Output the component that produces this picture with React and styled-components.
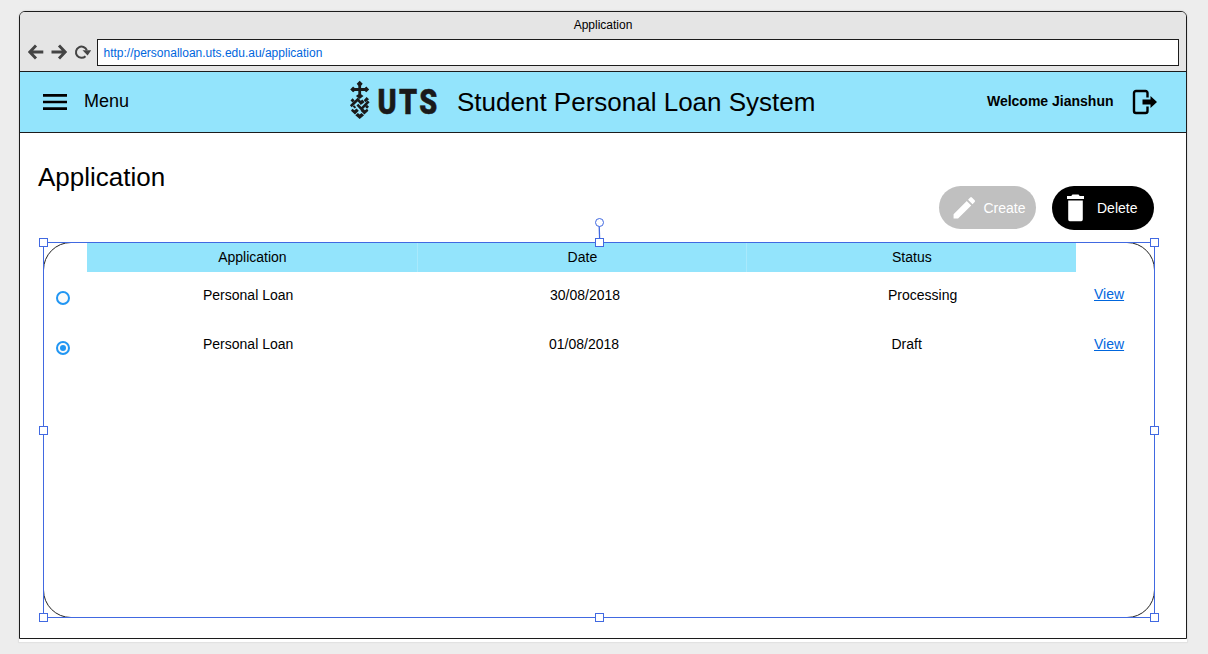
import React from 'react';
import styled, { createGlobalStyle } from 'styled-components';

const Global = createGlobalStyle`
  * { box-sizing: border-box; }
  body { margin: 0; background: #ededed; font-family: "Liberation Sans", Arial, sans-serif; color: #000; }
`;
const Desk = styled.div`
  width: 1208px; height: 654px; padding: 11px 0 0 19px; overflow: hidden; background: #ededed;
`;
const Paper = styled.div`
  width: 1168px; height: 631px; background: #fff; border-radius: 6px 6px 0 0; box-shadow: 0 0 1px 1px #e0e0e0;
`;
const Browser = styled.div`
  height: 628px; border: 1px solid #1c1c1c; border-radius: 6px 6px 0 0; overflow: hidden; background: #fff;
`;
const Chrome = styled.div`
  height: 60px; background: #e5e5e5; border-bottom: 1px solid #1c1c1c;
`;
const TabTitle = styled.div`
  height: 27px; line-height: 26px; font-size: 12px; text-align: center;
`;
const AddressBar = styled.div`
  display: flex; align-items: center; height: 27px; padding: 0 7px;
`;
const NavIcons = styled.svg`
  width: 70px; height: 27px; flex: none;
`;
const Address = styled.div`
  flex: 1; height: 27px; padding-left: 5.5px; border: 1px solid #1c1c1c; background: #fff;
  color: #0066dd; font-size: 12px; line-height: 26px;
`;
const Header = styled.header`
  display: flex; align-items: center; height: 61px; padding: 0 29px 0 19px;
  background: #93e4fc; border-bottom: 1px solid #1c1c1c;
`;
const Icon = styled.svg`
  display: block; flex: none; width: ${p => p.$w}px; height: ${p => p.$h}px; margin-left: ${p => p.$ml || 0}px;
`;
const MenuLabel = styled.span`
  width: 265px; margin-left: 13px; font-size: 18px; line-height: 20px; margin-top: -2px;
`;
const SystemTitle = styled.h1`
  margin: 0 auto 0 12px; font-size: 26px; font-weight: 400; line-height: 30px; white-space: nowrap;
`;
const Welcome = styled.span`
  margin: -2px 18.5px 0 0; font-size: 14px; font-weight: 700; line-height: 16px;
`;
const Toolbar = styled.div`
  display: flex; align-items: flex-start; height: 109px; padding: 0 32px 0 18px;
`;
const PageTitle = styled.h2`
  margin: 29px auto 0 0; font-size: 26px; font-weight: 400; line-height: 30px;
`;
const Pill = styled.button`
  display: flex; align-items: center; width: ${p => p.$w}px; height: ${p => p.$h}px; margin: 53px 0 0 16px; padding: 0;
  border: 0; border-radius: 22px; background: ${p => p.$bg}; color: #fff; font: 14px "Liberation Sans", Arial, sans-serif;
`;
const PillLabel = styled.span`
  margin-left: ${p => p.$ml}px;
`;
const Panel = styled.section`
  position: relative; width: 1112px; height: 376px; margin-left: 23px; border: 1px solid #222; border-radius: 28px;
`;
const HeadRow = styled.div`
  display: grid; grid-template-columns: 330px 329px 330px; width: 989px; height: 29px; margin-left: 43.4px; background: #93e4fc;
`;
const HeadCell = styled.div`
  font-size: 14px; line-height: 29px; text-align: center;
  & + & { border-left: 1px solid #a9e9fc; }
`;
const Row = styled.div`
  display: grid; grid-template-columns: 159px ${p => p.$date}px ${p => p.$status}px 1fr 60px;
  height: ${p => p.$h}px; padding-top: ${p => p.$top}px; font-size: 14px; line-height: 16px;
`;
const RadioCell = styled.div`
  padding: ${p => p.$top}px 0 0 12px;
`;
const Radio = styled.span`
  display: grid; place-items: center; width: 14px; height: 14px; border: 2px solid #2196f3; border-radius: 50%; background: #fafafa;
  &::after { content: ""; width: 6px; height: 6px; border-radius: 50%; background: ${p => (p.$on ? '#2196f3' : 'transparent')}; }
`;
const ViewLink = styled.a`
  margin-top: ${p => p.$mt}px; color: #0066dd; text-decoration: underline;
`;
const Selection = styled.div`
  position: absolute; inset: -1px; border: 1px solid #4169e1; pointer-events: none;
`;
const Handle = styled.i`
  position: absolute; left: ${p => p.$x}px; top: ${p => p.$y}px; width: 9px; height: 9px;
  border: 1px solid #4169e1; background: #fff;
`;
const Rotator = styled.svg`
  position: absolute; left: 550px; top: -26px; width: 12px; height: 24px;
`;
const handles = [
  [-5, -5], [551, -5], [1106, -5],
  [-5, 183], [1106, 183],
  [-5, 370], [551, 370], [1106, 370],
];
const rows = [
  { name: 'Personal Loan', date: '30/08/2018', status: 'Processing', dx: 347, sx: 338, h: 64, top: 15, mt: -1, rt: 4, on: false },
  { name: 'Personal Loan', date: '01/08/2018', status: 'Draft', dx: 346, sx: 342.5, h: 40, top: 0, mt: 0, rt: 5, on: true },
];

const Logo = () => (
  <Icon $w={96} $h={46} viewBox="0 -1 96 46" fill="#1a1a1a">
    <path d="M10.700 .8l3 3-1.600 2v2.100h3.600l1.600-1.400 2.900 2.900-2.900 2.900-1.600-1.400h-3.600v3.400l2.400 1.700-3.800 3-3.800-3 2.400-1.700v-3.400H5.700l-1.600 1.400-2.900-2.900 2.900-2.900 1.600 1.400h3.600V5.800l-1.600-2z" />
    <path d="M1.800 26.200l7-6.700 4 4.600M8.400 24.600l4 4.200 7.300-7.400M12.300 20.300l2.300 2.600" fill="none" stroke="#1a1a1a" strokeWidth="2.600" />
    <path d="M3.600 18.300l2.100 2.100-2.100 2.100-2.100-2.100zM17.600 16.900l2.400 2.300-3.300 3-2-2zM18 24.700l2 2-2 2-2-2zM5.200 25.200l2 2-1.500 1.400-2-2z" />
    <path d="M3.300 28.700l2.200 1.500 2-1.700 2.300 2.300-3.800 3.800-4-3.800zM18.100 28.700l-2.200 1.500-2-1.700-2.300 2.300 3.800 3.800 4-3.800zM10.700 34.600l1.800-1.700 2.600 2.400-4.400 3.700-4.400-3.700 2.600-2.400z" />
    <text transform="translate(28.500 34.200) scale(.8 1)" fontFamily="Roboto, sans-serif" fontWeight="900" fontSize="36" letterSpacing="3" stroke="#1a1a1a" strokeWidth=".5">UTS</text>
  </Icon>
);

export default function App() {
  return (
    <Desk>
      <Global />
      <Paper>
        <Browser>
          <Chrome>
            <TabTitle>Application</TabTitle>
            <AddressBar>
              <NavIcons viewBox="0 0 70 27" fill="none" stroke="#444" strokeWidth="2.900">
                <path d="M16.300 13H3M9 6.500L2.800 13L9 19.500M24.500 13h13.500M32 6.500L38.200 13L32 19.500" />
                <path d="M58.500 17.200a5.600 5.600 0 1 1 1.300-6" strokeWidth="2" />
                <path d="M55.500 11.300h8.700l-3.600 5.200z" fill="#444" stroke="none" />
              </NavIcons>
              <Address>http://personalloan.uts.edu.au/application</Address>
            </AddressBar>
          </Chrome>
          <Header>
            <Icon $w={32} $h={32} viewBox="0 0 24 24"><path d="M3 18h18v-2H3v2zm0-5h18v-2H3v2zm0-7v2h18V6H3z" /></Icon>
            <MenuLabel>Menu</MenuLabel>
            <Logo />
            <SystemTitle>Student Personal Loan System</SystemTitle>
            <Welcome>Welcome Jianshun</Welcome>
            <Icon $w={25} $h={26} viewBox="0 0 25 26">
              <path d="M15.500 8.500V4a2 2 0 0 0-2-2H4a2 2 0 0 0-2 2v18a2 2 0 0 0 2 2h9.500a2 2 0 0 0 2-2v-4.500" fill="none" stroke="#000" strokeWidth="2.400" />
              <path d="M10.500 10.600h8V7l6.500 6-6.500 6v-3.400h-8z" />
            </Icon>
          </Header>
          <Toolbar>
            <PageTitle>Application</PageTitle>
            <Pill $w={97} $h={43} $bg="#c0c0c0">
              <Icon $w={28.6} $h={28.6} $ml={10.8} viewBox="0 -.5 24 24" fill="#fff">
                <path d="M3 17.250V21h3.750L17.810 9.940l-3.750-3.750L3 17.250zM20.710 7.040a1 1 0 0 0 0-1.410l-2.340-2.340a1 1 0 0 0-1.410 0l-1.830 1.830 3.750 3.750 1.830-1.830z" />
              </Icon>
              <PillLabel $ml={5}>Create</PillLabel>
            </Pill>
            <Pill $w={102} $h={44} $bg="#000">
              <Icon $w={17} $h={26.6} $ml={15} viewBox="5 3.300 14 18" preserveAspectRatio="none" fill="#fff" overflow="visible">
                <path d="M6 19.700c0 .8.500 1.300 1.300 1.300h9.400c.8 0 1.300-.5 1.300-1.300V7H6v12.700zM19 4h-3.500l-1-1h-5l-1 1H5v2h14V4z" />
              </Icon>
              <PillLabel $ml={13}>Delete</PillLabel>
            </Pill>
          </Toolbar>
          <Panel>
            <HeadRow>
              <HeadCell>Application</HeadCell>
              <HeadCell>Date</HeadCell>
              <HeadCell>Status</HeadCell>
            </HeadRow>
            {rows.map(r => (
              <Row key={r.date} $date={r.dx} $status={r.sx} $h={r.h} $top={r.top}>
                <RadioCell $top={r.rt}><Radio $on={r.on} /></RadioCell>
                <span>{r.name}</span>
                <span>{r.date}</span>
                <span>{r.status}</span>
                <ViewLink $mt={r.mt}>View</ViewLink>
              </Row>
            ))}
            <Selection>
              <Rotator viewBox="0 0 12 24" fill="none" stroke="#4169e1">
                <path d="M5.200 9L5.700 24" strokeWidth="1.300" />
                <circle cx="5.500" cy="5.500" r="4" fill="#fff" />
              </Rotator>
              {handles.map(([x, y]) => <Handle key={`${x},${y}`} $x={x} $y={y} />)}
            </Selection>
          </Panel>
        </Browser>
      </Paper>
    </Desk>
  );
}
